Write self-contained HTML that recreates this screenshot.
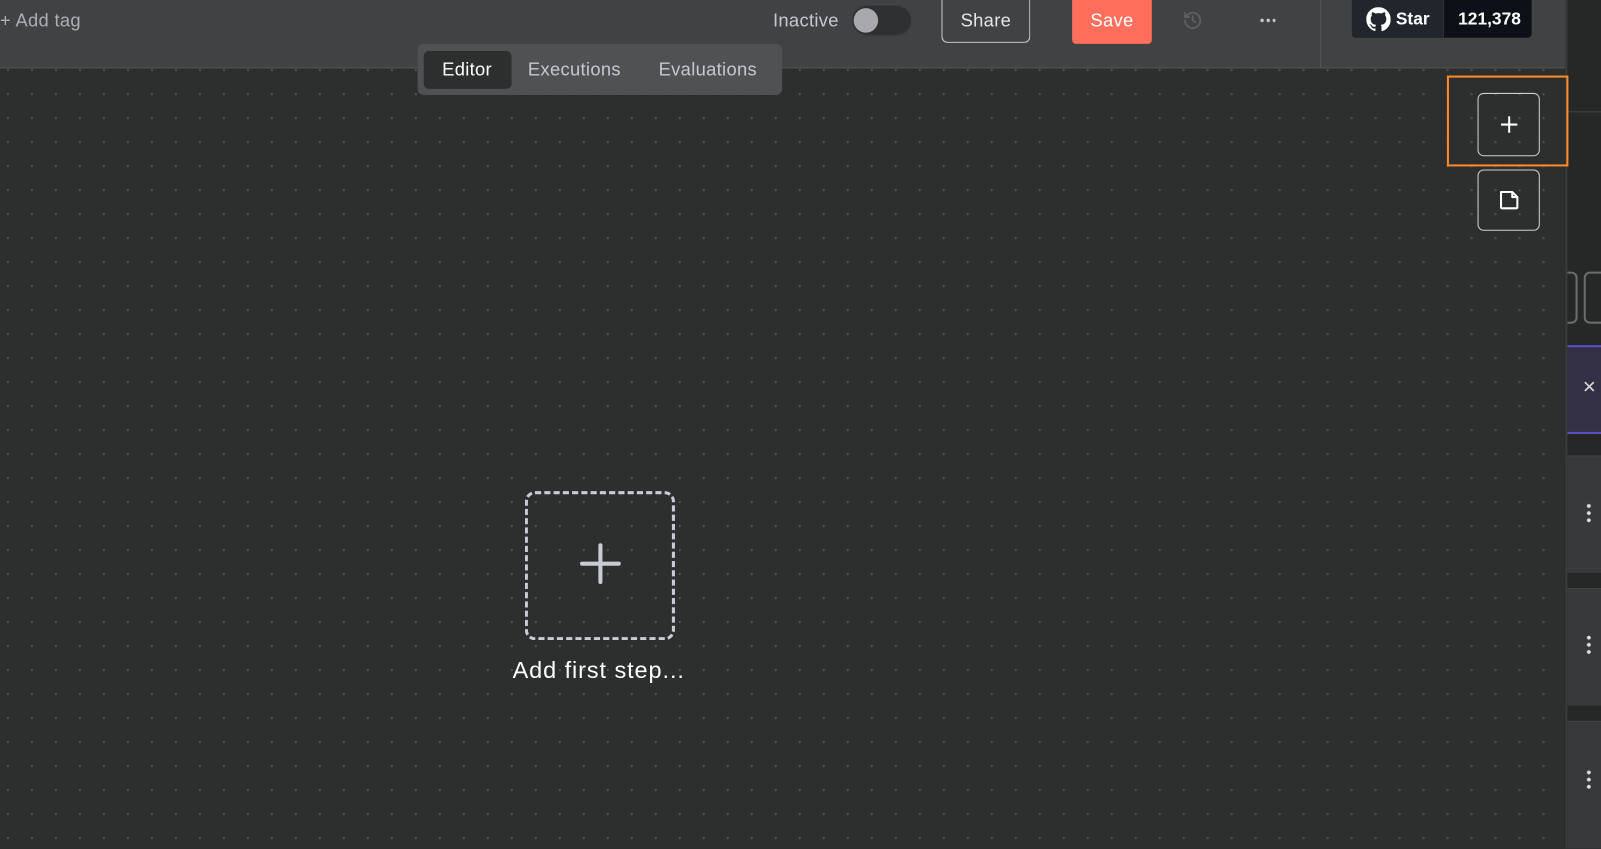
<!DOCTYPE html>
<html><head><meta charset="utf-8"><style>
*{box-sizing:border-box;margin:0;padding:0}
body{width:1601px;height:848px;overflow:hidden;background:#2b2c2c;font-family:"Liberation Sans",sans-serif;position:relative}
#w{position:absolute;left:0;top:0;width:1568px;height:831px;transform:scale(1.0211);transform-origin:0 0}
.hdr{position:absolute;left:0;top:0;width:1533px;height:67px;background:#414244;border-bottom:1px solid #555}
.canvas{position:absolute;left:0;top:67px;width:1532px;height:764px;background-color:#2d2e2e;
background-image:radial-gradient(circle,#555 1px,transparent 1.2px);background-size:23.5px 23.5px;background-position:-4px -10px}
.abs{position:absolute}
.txt{color:#c4c8d0;font-size:18px;letter-spacing:0.3px}
.rp{position:absolute;left:1533px;top:0;width:35px;height:831px;background:#262727;border-left:2px solid #3a3b3c;overflow:hidden}
</style></head><body><div id="w">
<div class="hdr">
  <div class="abs txt" style="left:0;top:10px;color:#a9aeb8">+ Add tag</div>
  <div class="abs txt" style="left:757px;top:10px">Inactive</div>
  <div class="abs" style="left:834px;top:5px;width:59px;height:30px;border-radius:15px;background:#2f3031;border:1px solid #3a3b3c"></div>
  <div class="abs" style="left:836px;top:8px;width:24px;height:24px;border-radius:50%;background:#a9a9ad"></div>
  <div class="abs txt" style="left:922px;top:0;width:87px;height:42px;border:1px solid #d0d0d0;border-top:none;border-radius:0 0 6px 6px;text-align:center;line-height:40px;color:#e4e6ea">Share</div>
  <div class="abs" style="left:1050px;top:0;width:78px;height:43px;background:#ff6f5c;border-radius:0 0 4px 4px;color:#fff;font-size:18px;text-align:center;line-height:40px;letter-spacing:0.3px">Save</div>
  <svg class="abs" style="left:1158px;top:10px" width="20" height="20" viewBox="0 0 24 24" fill="none" stroke="#5e6066" stroke-width="2" stroke-linecap="round"><path d="M3 12a9 9 0 1 0 3-6.7L3 8M3 3v5h5M12 7v5l3 2"/></svg>
  <div class="abs" style="left:1233px;top:18px;width:16px;height:4px;background:radial-gradient(circle,#c4c8d0 1.6px,transparent 1.9px) 0 0/6px 4px"></div>
  <div class="abs" style="left:1293px;top:0;width:1px;height:67px;background:#555"></div>
  <div class="abs" style="left:1324px;top:0;width:176px;height:37px;background:#0d1117;border-radius:0 0 4px 4px;overflow:hidden">
    <div class="abs" style="left:0;top:0;width:90px;height:37px;background:#21262d;border-right:1px solid #30363d"></div>
    <svg class="abs" style="left:14px;top:7px" width="24" height="24" viewBox="0 0 16 16" fill="#fff"><path d="M8 0C3.58 0 0 3.58 0 8c0 3.54 2.29 6.530 5.470 7.59.4.07.55-.17.55-.38v-1.33c-2.23.48-2.7-1.07-2.7-1.07-.36-.92-.89-1.170-.89-1.170-.73-.5.05-.49.05-.49.8.06 1.23.83 1.23.83.72 1.22 1.87.87 2.33.67.07-.52.28-.87.51-1.07-1.78-.2-3.64-.89-3.64-3.95 0-.87.31-1.59.82-2.15-.08-.2-.36-1.02.08-2.12 0 0 .67-.21 2.2.82A7.7 7.7 0 0 1 8 3.9c.68 0 1.36.09 2 .27 1.53-1.04 2.2-.82 2.2-.82.44 1.1.16 1.92.08 2.12.51.56.82 1.27.82 2.15 0 3.07-1.87 3.75-3.65 3.95.29.25.54.73.54 1.48v2.2c0 .21.15.46.55.38A8 8 0 0 0 16 8c0-4.420-3.58-8-8-8z"/></svg>
    <div class="abs" style="left:43px;top:9px;color:#fff;font-size:17px;font-weight:bold">Star</div>
    <div class="abs" style="left:104px;top:9px;color:#fff;font-size:17px;font-weight:bold">121,378</div>
  </div>
</div>
<div class="canvas"></div>
<div class="abs" style="left:409px;top:43px;width:357px;height:50px;background:#505152;border-radius:6px"></div>
<div class="abs" style="left:415px;top:50px;width:86px;height:37px;background:#2d2e2e;border-radius:5px"></div>
<div class="abs" style="left:433px;top:58px;color:#fff;font-size:18px;letter-spacing:0.3px">Editor</div>
<div class="abs txt" style="left:517px;top:58px">Executions</div>
<div class="abs txt" style="left:645px;top:58px">Evaluations</div>

<div class="abs" style="left:1417px;top:74px;width:119px;height:89px;border:2px solid #ff8a2b;z-index:2"></div>
<div class="abs" style="left:1447px;top:91px;width:61px;height:62px;border:1px solid #cfd0d3;border-radius:6px"></div>
<svg class="abs" style="left:1467px;top:111px" width="22" height="22" viewBox="0 0 22 22" stroke="#fff" stroke-width="2"><path d="M11 3v16M3 11h16"/></svg>
<div class="abs" style="left:1447px;top:166px;width:61px;height:60px;border:1px solid #cfd0d3;border-radius:6px"></div>
<svg class="abs" style="left:1466px;top:184px" width="24" height="24" viewBox="0 0 24 24" fill="none" stroke="#fff" stroke-width="2" stroke-linejoin="round"><path d="M4 4h11l5 5v10a1 1 0 0 1-1 1H5a1 1 0 0 1-1-1z M15 4v5h5"/></svg>

<div class="abs" style="left:514px;top:481px;width:147px;height:146px;border:3px dashed #c8ccd4;border-radius:10px"></div>
<svg class="abs" style="left:567px;top:531px" width="42" height="42" viewBox="0 0 42 42" stroke="#c8ccd4" stroke-width="4" stroke-linecap="round"><path d="M21 3v36M3 21h36"/></svg>
<div class="abs" style="left:502px;top:643px;color:#fff;font-size:23px;letter-spacing:0.9px">Add first step...</div>

<div class="rp">
  <div class="abs" style="left:0;top:0;width:35px;height:110px;border-bottom:1px solid #444"></div>
  <div class="abs" style="left:-10px;top:266px;width:20px;height:51px;border:2px solid #6b6c6e;border-radius:6px"></div>
  <div class="abs" style="left:16px;top:266px;width:60px;height:51px;border:2px solid #6b6c6e;border-radius:6px"></div>
  <div class="abs" style="left:0;top:338px;width:35px;height:87px;background:#332f45;border-top:2px solid #5c4ec4;border-bottom:2px solid #5c4ec4"></div>
  <div class="abs" style="left:15px;top:366px;color:#ddd;font-size:22px">×</div>
  <div class="abs" style="left:0;top:446px;width:35px;height:115px;background:#38393b;border-top:1px solid #444"></div>
  <div class="abs" style="left:0;top:576px;width:35px;height:115px;background:#38393b;border-top:1px solid #444"></div>
  <div class="abs" style="left:0;top:706px;width:35px;height:125px;background:#38393b;border-top:1px solid #444"></div>
  <div class="abs" style="left:19px;top:492px;width:4px;height:20px;background:radial-gradient(circle,#ddd 1.8px,transparent 2px) 0 0/4px 7px"></div>
  <div class="abs" style="left:19px;top:621px;width:4px;height:20px;background:radial-gradient(circle,#ddd 1.8px,transparent 2px) 0 0/4px 7px"></div>
  <div class="abs" style="left:19px;top:753px;width:4px;height:20px;background:radial-gradient(circle,#ddd 1.8px,transparent 2px) 0 0/4px 7px"></div>
</div>
</div></body></html>
